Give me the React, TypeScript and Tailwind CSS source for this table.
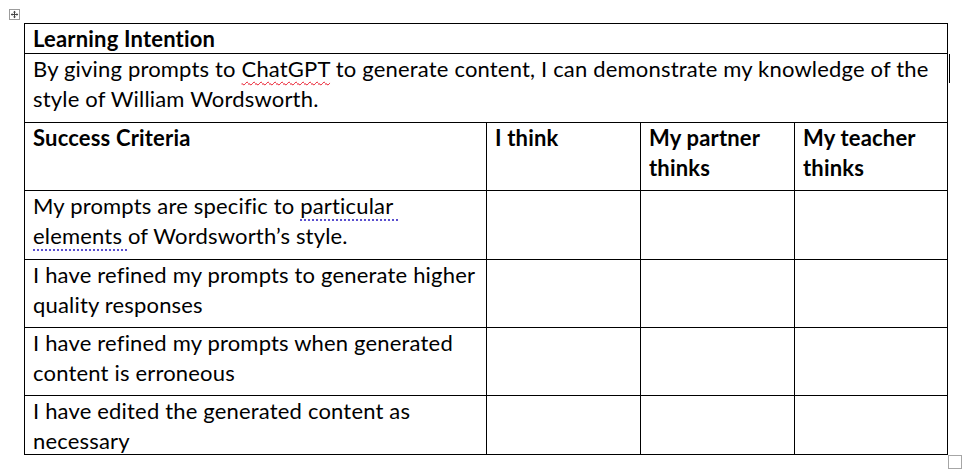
import React from 'react';

const squiggle = 'underline decoration-wavy decoration-[#e81123] decoration-1 underline-offset-[4px]';
const dotted = 'underline decoration-dotted decoration-[#5a4fcf] decoration-2 underline-offset-[5px]';

const Cell = ({ children, span }: { children: React.ReactNode; span?: boolean }) => (
  <div className={`bg-white pl-[8px] ${span ? 'col-span-4' : ''}`}>{children}</div>
);

const Line = ({ children, bold }: { children: React.ReactNode; bold?: boolean }) => (
  <div className={`whitespace-pre ${bold ? 'font-bold' : ''}`}>{children}</div>
);

const criteria: string[][] = [
  ['I have refined my prompts to generate higher', 'quality responses'],
  ['I have refined my prompts when generated', 'content is erroneous'],
  ['I have edited the generated content as', 'necessary'],
];

const MoveHandle = () => (
  <svg width="11" height="11" viewBox="0 0 11 11" className="absolute left-[9px] top-[9px]">
    <rect x="0.5" y="0.5" width="10" height="10" fill="white" stroke="#9c9c9c" />
    <path d="M5.5 2v7M2 5.5h7" stroke="#444" strokeWidth="1" />
    <path d="M5.5 1.8l-1.5 1.6h3zM5.5 9.2l-1.5-1.6h3zM1.8 5.5l1.6-1.5v3zM9.2 5.5l-1.6-1.5v3z" fill="#444" />
  </svg>
);

export default function App() {
  return (
    <div className="relative w-[972px] h-[476px] bg-white text-black font-['Lato',sans-serif] text-[22px] tracking-[0.18px] leading-[30px] pt-[23px] pl-[24px]">
      <MoveHandle />
      <div className="grid w-[924px] grid-cols-[461px_153px_153px_152px] grid-rows-[29px_68px_67px_68px_67px_67px_58px] gap-px bg-black p-px">
        <Cell span>
          <Line bold>Learning Intention</Line>
        </Cell>
        <Cell span>
          <Line>
            By giving prompts to <span className={squiggle}>ChatGPT</span> to generate content, I can demonstrate my knowledge of the
          </Line>
          <Line>style of William Wordsworth.</Line>
        </Cell>

        <Cell>
          <Line bold>Success Criteria</Line>
        </Cell>
        <Cell>
          <Line bold>I think</Line>
        </Cell>
        <Cell>
          <Line bold>My partner</Line>
          <Line bold>thinks</Line>
        </Cell>
        <Cell>
          <Line bold>My teacher</Line>
          <Line bold>thinks</Line>
        </Cell>

        <Cell>
          <Line>
            My prompts are specific to <span className={dotted}>particular </span>
          </Line>
          <Line>
            <span className={dotted}>elements </span>of Wordsworth’s style.
          </Line>
        </Cell>
        <Cell>{null}</Cell>
        <Cell>{null}</Cell>
        <Cell>{null}</Cell>

        {criteria.map((c) => (
          <React.Fragment key={c[0]}>
            <Cell>
              <Line>{c[0]}</Line>
              <Line>{c[1]}</Line>
            </Cell>
            <Cell>{null}</Cell>
            <Cell>{null}</Cell>
            <Cell>{null}</Cell>
          </React.Fragment>
        ))}
      </div>
      {/* text cursor at the end of the row */}
      <div className="absolute left-[949px] top-[54px] h-[29px] w-px bg-black" />
      {/* table resize handle */}
      <div className="absolute left-[948px] top-[455px] h-[14px] w-[14px] border border-[#a6a6a6] bg-white" />
    </div>
  );
}
